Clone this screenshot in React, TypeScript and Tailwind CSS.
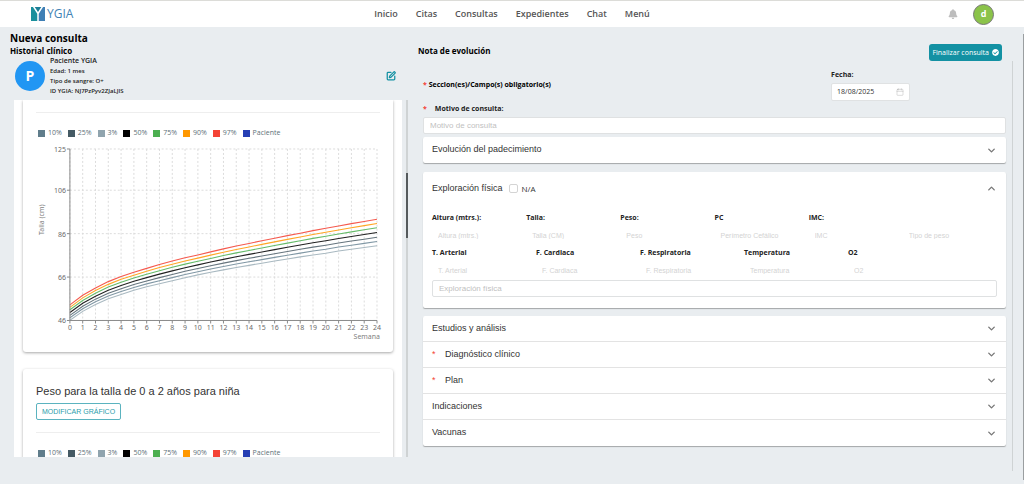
import { useState } from "react"
import { FaBell, FaCheckCircle } from "react-icons/fa"
import { Calendar, ChevronDown, ChevronUp, SquarePen } from "lucide-react"

const navItems = ["Inicio", "Citas", "Consultas", "Expedientes", "Chat", "Menú"]

const legend = [
  { label: "10%", color: "bg-[#607d8b]" },
  { label: "25%", color: "bg-[#455a64]" },
  { label: "3%", color: "bg-[#90a4ae]" },
  { label: "50%", color: "bg-black" },
  { label: "75%", color: "bg-[#4caf50]" },
  { label: "90%", color: "bg-[#ff9800]" },
  { label: "97%", color: "bg-[#f44336]" },
  { label: "Paciente", color: "bg-[#263fb4]" },
]

// weekly heights in cm for the outer percentiles, the others lie between them
const p97 = [53.2, 57.6, 61, 63.9, 66.3, 68.2, 70, 71.8, 73.4, 74.9, 76.2, 77.6, 79, 80.3, 81.5, 82.7, 83.9, 85.1, 86.2, 87.4, 88.5, 89.5, 90.6, 91.6, 92.6]
const p3 = [46.1, 50.2, 53.4, 56, 58, 59.9, 61.5, 62.9, 64.3, 65.7, 67, 68.2, 69.3, 70.4, 71.4, 72.4, 73.4, 74.3, 75.3, 76.2, 77, 78, 78.8, 79.6, 80.4]

const curves = [
  { color: "#a9b9c1", k: 1 },
  { color: "#8198a5", k: 0.84 },
  { color: "#66757e", k: 0.68 },
  { color: "#222222", k: 0.5 },
  { color: "#66bb6a", k: 0.32 },
  { color: "#ffa726", k: 0.16 },
  { color: "#f55a4e", k: 0 },
]

const yTicks = [125, 106, 86, 66, 46]
const weeks = Array.from({ length: 25 }, (_, i) => i)

const xPos = (week: number) => 34 + (week * 308) / 24
const yPos = (cm: number) => 6 + ((125 - cm) * 172) / 79

const vitals1 = [
  { id: "altura", label: "Altura (mtrs.):", placeholder: "Altura (mtrs.)" },
  { id: "talla", label: "Talla:", placeholder: "Talla (CM)" },
  { id: "peso", label: "Peso:", placeholder: "Peso" },
  { id: "pc", label: "PC", placeholder: "Perímetro Cefálico" },
  { id: "imc", label: "IMC:", placeholder: "IMC" },
  { id: "tipo", label: "", placeholder: "Tipo de peso" },
]

const vitals2 = [
  { id: "arterial", label: "T. Arterial", placeholder: "T. Arterial" },
  { id: "cardiaca", label: "F. Cardiaca", placeholder: "F. Cardiaca" },
  { id: "respiratoria", label: "F. Respiratoria", placeholder: "F. Respiratoria" },
  { id: "temperatura", label: "Temperatura", placeholder: "Temperatura" },
  { id: "o2", label: "O2", placeholder: "O2" },
]

const sections = [
  { title: "Estudios y análisis" },
  { title: "Diagnóstico clínico", required: true },
  { title: "Plan", required: true },
  { title: "Indicaciones" },
  { title: "Vacunas" },
]

export default function App() {
  const [date, setDate] = useState("18/08/2025")
  const [reason, setReason] = useState("")

  return (
    <div className="h-screen min-h-[484px] flex flex-col bg-[#e9edf0] font-['Open_Sans','Noto_Sans',sans-serif] text-[#222] overflow-hidden">
      <Header />

      <div className="flex-1 min-h-0 flex">
        <main className="flex-1 min-w-0 grid grid-cols-[2fr_3fr] pr-[3px]">
          {/* Historial */}
          <section className="min-w-0 min-h-0 flex flex-col pb-[27px]">
            <div className="pl-[10px] pt-1 text-black">
              <h1 className="text-[10px] leading-[14px] font-bold">Nueva consulta</h1>
              <h2 className="text-[8px] leading-[11px] font-bold">Historial clínico</h2>
            </div>
            <div className="flex items-center pl-[15px] pr-3">
              <div className="size-[30px] rounded-full bg-[#2196f3] text-white text-sm font-bold flex items-center justify-center">P</div>
              <div className="ml-[5px] text-[6px] leading-[10px] font-semibold">
                <p className="text-[7px]">Paciente YGIA</p>
                <p>Edad: 1 mes</p>
                <p>Tipo de sangre: O+</p>
                <p>ID YGIA: NJ7PzPyv2ZJaLJIS</p>
              </div>
              <button aria-label="Editar paciente" className="ml-auto text-[#1391a3]">
                <SquarePen size={10} strokeWidth={3} />
              </button>
            </div>

            <div className="mt-1 flex-1 min-h-0 flex">
              <div className="ml-[14px] flex-1 min-w-0 overflow-hidden bg-white px-[9px]">
                <article className="rounded-b-[3px] px-[13px] pb-3 shadow-[0_1px_3px_rgba(0,0,0,0.35)]">
                  <div className="h-[13px] border-b border-[#eee]" />
                  <Legend />
                  <GrowthChart />
                </article>
                <article className="mt-[17px] rounded-t-[3px] px-[13px] pt-[15px] pb-3 shadow-[0_1px_3px_rgba(0,0,0,0.35)]">
                  <h3 className="font-['Liberation_Sans',sans-serif] text-[11px] leading-[14px] text-[#333]">Peso para la talla de 0 a 2 años para niña</h3>
                  <button className="mt-[5px] h-[17px] px-[5px] rounded-[2px] border border-[#5bb3bf] font-['Liberation_Sans',sans-serif] text-[7px] leading-[15px] text-[#2a9cab] block">
                    MODIFICAR GRÁFICO
                  </button>
                  <div className="h-[13px] border-b border-[#eee]" />
                  <Legend />
                </article>
              </div>
              <div className="ml-[4px] w-[2px] bg-[#cfd3d4] pt-[73px]">
                <div className="h-[65px] bg-[#555a5c]" />
              </div>
            </div>
          </section>

          {/* Nota de evolución */}
          <section className="min-w-0 min-h-0 flex flex-col pl-[10px]">
            <div className="flex items-start justify-between pr-[18px] pt-[17px]">
              <h2 className="text-[8px] leading-[13px] font-bold text-black">Nota de evolución</h2>
              <button className="h-[17px] px-[3px] rounded-[3px] bg-[#1391a3] text-white text-[7px] leading-[17px] flex items-center gap-[3px]">
                Finalizar consulta <FaCheckCircle size={7} />
              </button>
            </div>

            <div className="flex-1 min-h-0 flex mb-[13px]">
              <form className="flex-1 min-w-0 pl-[5px] pr-[6px]" onSubmit={e => e.preventDefault()}>
                <div className="flex pt-[9px]">
                  <p className="w-[70%] pt-[10px] text-[7px] leading-[10px] font-bold text-black">
                    <span className="text-[#f44336]">*</span> Seccion(es)/Campo(s) obligatorio(s)
                  </p>
                  <div>
                    <label htmlFor="fecha" className="block text-[7px] leading-[10px] font-bold">Fecha:</label>
                    <div className="mt-[3px] h-[18px] w-[79px] flex items-center rounded-[2px] border border-[#e0e2e3] bg-white pl-[5px] pr-[5px]">
                      <input id="fecha" value={date} onChange={e => setDate(e.target.value)} className="w-full min-w-0 text-[7px] leading-[12px] text-[#333] outline-none" />
                      <Calendar size={8} strokeWidth={1} className="shrink-0 text-[#999]" />
                    </div>
                  </div>
                </div>

                <label htmlFor="motivo" className="mt-[3px] flex gap-2 text-[7px] leading-[10px] font-bold">
                  <span className="text-[#f44336]">*</span> Motivo de consulta:
                </label>
                <input
                  id="motivo"
                  value={reason}
                  onChange={e => setReason(e.target.value)}
                  placeholder="Motivo de consulta"
                  className="mt-[3px] block h-[17px] w-full rounded-[2px] border border-[#dfe1e2] bg-white px-[6px] font-['Liberation_Sans',sans-serif] text-[8px] placeholder:text-[#bfbfbf] outline-none"
                />

                <div className="mt-[3px] rounded-[2px] bg-white shadow-[0_1px_1px_rgba(0,0,0,0.3)]">
                  <SectionRow title="Evolución del padecimiento" />
                </div>

                <div className="mt-[9px] rounded-[2px] bg-white px-[9px] pb-[11px] shadow-[0_1px_1px_rgba(0,0,0,0.3)]">
                  <div className="flex h-[33px] items-center font-['Liberation_Sans',sans-serif] text-[9px] text-[#333]">
                    <span>Exploración física</span>
                    <label className="ml-[6px] flex items-center gap-1 font-['Open_Sans',sans-serif] text-[8px]">
                      <input type="checkbox" className="size-[9px] appearance-none rounded-[2px] border border-[#d4d4d4] bg-white" />
                      N/A
                    </label>
                    <button type="button" aria-label="Contraer exploración física" className="ml-auto text-[#777]">
                      <ChevronUp size={11} strokeWidth={3} />
                    </button>
                  </div>
                  <div className="grid grid-cols-6 pt-2">
                    {vitals1.map(v => <Vital key={v.id} {...v} />)}
                  </div>
                  <div className="mt-[5px] flex">
                    {vitals2.map(v => (
                      <div key={v.id} className="w-[104px]">
                        <Vital {...v} />
                      </div>
                    ))}
                  </div>
                  <input
                    aria-label="Exploración física"
                    placeholder="Exploración física"
                    className="mt-[2px] block h-[17px] w-full rounded-[2px] border border-[#dfe1e2] px-[6px] font-['Liberation_Sans',sans-serif] text-[8px] placeholder:text-[#bfbfbf] outline-none"
                  />
                </div>

                <div className="mt-[8px] rounded-[2px] bg-white divide-y divide-[#e3e3e3] shadow-[0_1px_1px_rgba(0,0,0,0.3)]">
                  {sections.map(s => <SectionRow key={s.title} {...s} />)}
                </div>
              </form>
              <div className="mr-[7px] w-px bg-[#cfd3d4]" />
            </div>
          </section>
        </main>
        <div className="mt-[7px] mb-1 w-px bg-[#9a9ea0]" />
      </div>
    </div>
  )
}

function Header() {
  return (
    <header className="shrink-0 h-[27px] grid grid-cols-[1fr_auto_1fr] items-center bg-white border-t border-[#dcdcd8]">
      <a href="#" className="flex items-center gap-[2px] pl-[31px] text-[12px] leading-[16px] text-[#3f83b5]">
        <Logo />
        YGIA
      </a>
      <nav className="flex gap-[18px] text-[9px] leading-[14px] font-semibold text-[#555]">
        {navItems.map(item => <a key={item} href="#">{item}</a>)}
      </nav>
      <div className="flex items-center justify-end gap-[15px] pr-[30px]">
        <button aria-label="Notificaciones" className="text-[#bdbdbd]"><FaBell size={10} /></button>
        <button aria-label="Cuenta" className="size-[21px] rounded-full border border-[#777] bg-[#8bc34a] text-white text-[9px] leading-[14px] font-bold">d</button>
      </div>
    </header>
  )
}

function Logo() {
  return (
    <svg width="14" height="14" viewBox="0 0 28 28">
      <path d="M0 0 H14 V28 H0 Z" fill="#1a8f9c" />
      <path d="M14 0 H28 V28 H14 Z" fill="#3f7fb5" />
      <path d="M5 0 H23 L14 12 Z" fill="#1d7f97" />
      <path d="M5 -1 L14 13 L23 -1 M14 12 V28" fill="none" stroke="#fff" strokeWidth="3" />
    </svg>
  )
}

function Legend() {
  return (
    <ul className="flex h-[30px] items-end gap-[6px] pb-[5px] pl-[2px] text-[7px] leading-[10px] text-[#607078]">
      {legend.map(l => (
        <li key={l.label} className="flex items-center gap-[3px]">
          <span className={`size-[7px] ${l.color}`} />
          {l.label}
        </li>
      ))}
    </ul>
  )
}

function GrowthChart() {
  return (
    <svg viewBox="0 0 345 198" className="block w-full overflow-visible font-['Noto_Sans',sans-serif]" fontSize="7" fill="#6b6b6b">
      <g stroke="#dcdcdc" strokeDasharray="2 2">
        {yTicks.map(t => <line key={t} x1="34" x2="342" y1={yPos(t)} y2={yPos(t)} />)}
        {weeks.map(w => <line key={w} x1={xPos(w)} x2={xPos(w)} y1="6" y2="178" />)}
      </g>
      {curves.map(c => (
        <polyline
          key={c.k}
          points={weeks.map(w => `${xPos(w)},${yPos(p97[w] + (p3[w] - p97[w]) * c.k)}`).join(" ")}
          fill="none"
          stroke={c.color}
          strokeWidth="1.1"
        />
      ))}
      <path d="M34 6 V178 H342" fill="none" stroke="#8a8a8a" />
      {yTicks.map(t => (
        <g key={t}>
          <line x1="31" x2="34" y1={yPos(t)} y2={yPos(t)} stroke="#8a8a8a" />
          <text x="30" y={yPos(t) + 3} textAnchor="end">{t}</text>
        </g>
      ))}
      {weeks.map(w => (
        <g key={w}>
          <line x1={xPos(w)} x2={xPos(w)} y1="178" y2="181" stroke="#8a8a8a" />
          <text x={xPos(w)} y="188" textAnchor="middle">{w}</text>
        </g>
      ))}
      <text x="345" y="197" textAnchor="end" fill="#808080">Semana</text>
      <text transform="translate(8 77) rotate(-90)" textAnchor="middle" fill="#808080">Talla (cm)</text>
    </svg>
  )
}

function SectionRow({ title, required = false }: { title: string; required?: boolean }) {
  return (
    <button type="button" className="flex h-[26px] w-full items-center px-[9px] text-left font-['Liberation_Sans',sans-serif] text-[9px] text-[#333]">
      {required && <span className="w-[13px] text-[#f44336]">*</span>}
      {title}
      <ChevronDown size={11} strokeWidth={3} className="ml-auto text-[#777]" />
    </button>
  )
}

function Vital({ id, label, placeholder }: { id: string; label: string; placeholder: string }) {
  return (
    <div className="min-w-0">
      <label htmlFor={id} className="block h-[10px] text-[7px] leading-[10px] font-bold">{label}</label>
      <input
        id={id}
        aria-label={placeholder}
        placeholder={placeholder}
        disabled
        className="mt-[5px] block h-[15px] w-full bg-transparent px-[6px] font-['Liberation_Sans',sans-serif] text-[7px] placeholder:text-[#d3d3d3]"
      />
    </div>
  )
}
